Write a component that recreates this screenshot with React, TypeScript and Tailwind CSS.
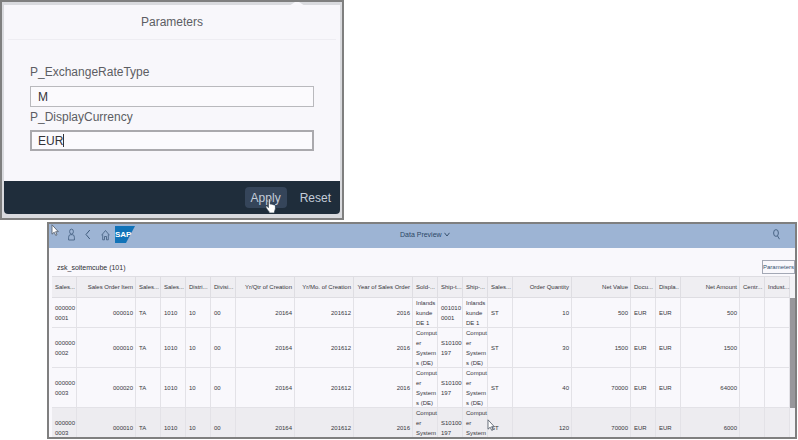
import React from "react";

type Column = { title: string; wide?: boolean };

const columns: Column[] = [
  { title: "Sales..." },
  { title: "Sales Order Item", wide: true },
  { title: "Sales..." },
  { title: "Sales..." },
  { title: "Distri..." },
  { title: "Divisi..." },
  { title: "Yr/Qtr of Creation", wide: true },
  { title: "Yr/Mo. of Creation", wide: true },
  { title: "Year of Sales Order", wide: true },
  { title: "Sold-..." },
  { title: "Ship-t..." },
  { title: "Ship-..." },
  { title: "Sales..." },
  { title: "Order Quantity", wide: true },
  { title: "Net Value", wide: true },
  { title: "Docu..." },
  { title: "Displa.." },
  { title: "Net Amount", wide: true },
  { title: "Centr..." },
  { title: "Indust..." },
];

const inland = "Inlands\nkunde\nDE 1";
const computer = "Comput\ner\nSystem\ns (DE)";

const makeRow = (
  order: string,
  item: string,
  customer: string,
  shipTo: string,
  quantity: string,
  value: string,
  amount: string,
): string[] => [
  order, item, "TA", "1010", "10", "00", "20164", "201612", "2016",
  customer, shipTo, customer, "ST", quantity, value, "EUR", "EUR", amount, "", "",
];

const rows: string[][] = [
  makeRow("000000\n0001", "000010", inland, "001010\n0001", "10", "500", "500"),
  makeRow("000000\n0002", "000010", computer, "S10100\n197", "30", "1500", "1500"),
  makeRow("000000\n0003", "000020", computer, "S10100\n197", "40", "70000", "64000"),
  makeRow("000000\n0003", "000010", computer, "S10100\n197", "120", "70000", "6000"),
];

function ArrowCursor({ className }: { className: string }) {
  return (
    <svg className={className} viewBox="0 0 8 12" aria-hidden="true">
      <path d="M1 .8v9.4l2.2-2 1.5 3.2 1.3-.6-1.4-3.1h2.7z" fill="#fff" stroke="#4b5563" strokeWidth=".8" />
    </svg>
  );
}

function HandCursor({ className }: { className: string }) {
  return (
    <svg className={className} viewBox="0 0 12 16" aria-hidden="true">
      <path
        d="M3.4 1.6c0-1.2 1.8-1.2 1.8 0v4.6c.5-.5 1.6-.4 1.8.3.6-.4 1.5-.2 1.7.5.8-.3 1.7.1 1.7 1v2.6c0 1.3-.7 2-.9 3v1.4H4v-1.3C3 12.700 1.800 10.900.900 9.200.600 8.100 1.700 7.700 2.500 8.600l.9 1z"
        fill="#fff"
        stroke="#273746"
        strokeWidth=".7"
      />
    </svg>
  );
}

function ParametersDialog() {
  return (
    <section className="relative w-[344px] max-w-full shrink-0 border-2 border-[#7f7f7f] bg-[#d9dade] px-0.5 pt-[3px] pb-1">
      <svg className="absolute top-0 left-[287px] h-[4px] w-[16px]" viewBox="0 0 16 4" aria-hidden="true">
        <path d="M0 4 6 0h4l6 4z" fill="#f8f7fb" />
      </svg>
      <div className="overflow-hidden rounded-b bg-[#f8f7fb]">
        <h1 className="mx-1 border-b border-[#eeedf2] text-center text-xs leading-[34px] text-[#5c5d63]">Parameters</h1>
        <div className="px-[26px] pt-6 pb-[30px] text-xs">
          <label htmlFor="rate" className="mb-1.5 block leading-4 text-[#5c5d63]">P_ExchangeRateType</label>
          <input
            id="rate"
            defaultValue="M"
            className="block h-[21px] w-full border border-[#b9b9bd] bg-[#fbfafd] px-[7px] text-[#333338] outline-none"
          />
          <label htmlFor="currency" className="mt-0.5 mb-[5px] block leading-4 text-[#5c5d63]">P_DisplayCurrency</label>
          <div className="relative">
            <input
              id="currency"
              defaultValue="EUR"
              className="block h-[21px] w-full border-2 border-[#aaa9ad] bg-[#fbfafd] px-1.5 text-[#333338] outline-none"
            />
            <span className="absolute top-1 left-[33px] h-[13px] w-px bg-[#333338]" />
          </div>
        </div>
        <div className="flex h-[33px] items-center justify-end gap-1 bg-[#1f2d3b] text-xs text-[#c3ccd9]">
          <button className="relative h-[21px] rounded-sm bg-[#35455a] px-1.5">
            Apply
            <HandCursor className="absolute top-[11px] left-[20px] h-[16px] w-[12px]" />
          </button>
          <button className="h-[21px] px-[9px]">Reset</button>
        </div>
      </div>
    </section>
  );
}

function SapLogo() {
  return (
    <svg className="h-[17px] w-[20px]" viewBox="0 0 20 17" role="img" aria-label="SAP">
      <path d="M0 0h20L11 17H0z" fill="#1173b8" />
      <text x="0" y="11" fontSize="8" fontWeight="700" fill="#fff">
        SAP
      </text>
    </svg>
  );
}

function ShellBar() {
  return (
    <header className="relative flex h-6 shrink-0 items-center justify-between bg-[#9db4d4] pr-3.5 pb-[3px] pl-[19px] text-[#3f5b7c]">
      <ArrowCursor className="absolute top-0 left-[2px] h-[12px] w-[8px]" />
      <nav className="flex items-center">
        <button aria-label="User" className="mr-2.5">
          <svg className="h-[13px] w-[7px]" viewBox="0 0 7 13" fill="none" stroke="currentColor" strokeWidth=".8">
            <ellipse cx="3.500" cy="3.600" rx="1.900" ry="2.500" />
            <path d="M.6 12V9.300q0-2.600 2-2.600h1.800q2 0 2 2.600V12z" />
          </svg>
        </button>
        <button aria-label="Back" className="mr-2.5">
          <svg className="h-[11px] w-[6px]" viewBox="0 0 6 11" fill="none" stroke="currentColor">
            <path d="M4.800 1 1 5.500 4.800 10" />
          </svg>
        </button>
        <button aria-label="Home" className="mr-[5px]">
          <svg className="h-[12px] w-[9px]" viewBox="0 0 9 12" fill="none" stroke="currentColor" strokeWidth=".8">
            <path d="M.5 6.300 4.500 1.500l4 4.800M1.700 5.500v5.300h1.800V7.500h2v3.300h1.800V5.500" />
          </svg>
        </button>
        <SapLogo />
      </nav>
      <button className="absolute left-[351px] flex items-center gap-0.5 text-[7px] leading-3 text-[#2c4766]">
        Data Preview
        <svg className="h-[5px] w-[6px]" viewBox="0 0 6 5" fill="none" stroke="currentColor" strokeWidth=".9">
          <path d="M.5.8 3 4 5.500.8" />
        </svg>
      </button>
      <button aria-label="Search" className="mr-px">
        <svg className="h-[11px] w-[7px]" viewBox="0 0 7 11" fill="none" stroke="currentColor" strokeWidth=".9">
          <ellipse cx="3" cy="4" rx="2.400" ry="3.400" />
          <path d="m4.500 6.900 2 3.300" />
        </svg>
      </button>
    </header>
  );
}

function DataTable() {
  return (
    <div className="relative flex min-h-0 flex-1 items-start overflow-hidden pl-[3px]">
      <table className="w-full flex-1 table-fixed border-separate border-spacing-0 text-[6px] leading-[10px] text-[#36363c]">
        <colgroup>
          {columns.map((c, i) => (
            <col key={i} className={c.wide ? "w-[59px]" : "w-[25px]"} />
          ))}
        </colgroup>
        <thead>
          <tr className="h-[22px] bg-[#efeef2]">
            {columns.map((c, i) => (
              <th
                key={i}
                className={
                  "whitespace-nowrap p-0 font-normal shadow-[inset_-1px_-1px_0_#dedde2,inset_0_1px_0_#dedde2] " +
                  (c.wide ? "pr-[3px] text-right" : "pl-[3px] text-left")
                }
              >
                {c.title}
              </th>
            ))}
          </tr>
        </thead>
        <tbody>
          {rows.map((row, r) => (
            <tr key={r} className={r === 3 ? "bg-[#edecf0]" : "bg-[#f9f8fc]"}>
              {row.map((cell, i) => (
                <td
                  key={i}
                  className={
                    "whitespace-pre p-0 shadow-[inset_-1px_-1px_0_#e3e2e7] " +
                    (columns[i].wide ? "pr-[3px] text-right" : "pl-[3px] text-left")
                  }
                >
                  {cell}
                </td>
              ))}
            </tr>
          ))}
        </tbody>
      </table>
      <div className="h-full w-[5px] bg-[#f3f2f6] pt-[22px]">
        <div className="h-[110px] bg-[#98979b]" />
      </div>
      <ArrowCursor className="absolute top-[143px] left-[438px] h-[12px] w-[8px]" />
    </div>
  );
}

export default function App() {
  return (
    <main className="flex h-screen flex-col gap-0.5 overflow-hidden bg-white pb-px font-['Liberation_Sans','Arial',sans-serif]">
      <ParametersDialog />
      <section className="mr-px ml-[47px] flex min-h-0 flex-1 flex-col border-2 border-[#7f7f7f] bg-[#f9f8fc]">
        <ShellBar />
        <div className="flex h-7 shrink-0 items-end justify-between pb-0.5 pl-2">
          <h2 className="text-[7px] leading-3 text-[#2f2f35]">zsk_soitemcube (101)</h2>
          <button className="h-[14px] border border-[#a3a8b5] text-[6px] leading-3 text-[#34506f]">Parameters</button>
        </div>
        <DataTable />
      </section>
    </main>
  );
}
